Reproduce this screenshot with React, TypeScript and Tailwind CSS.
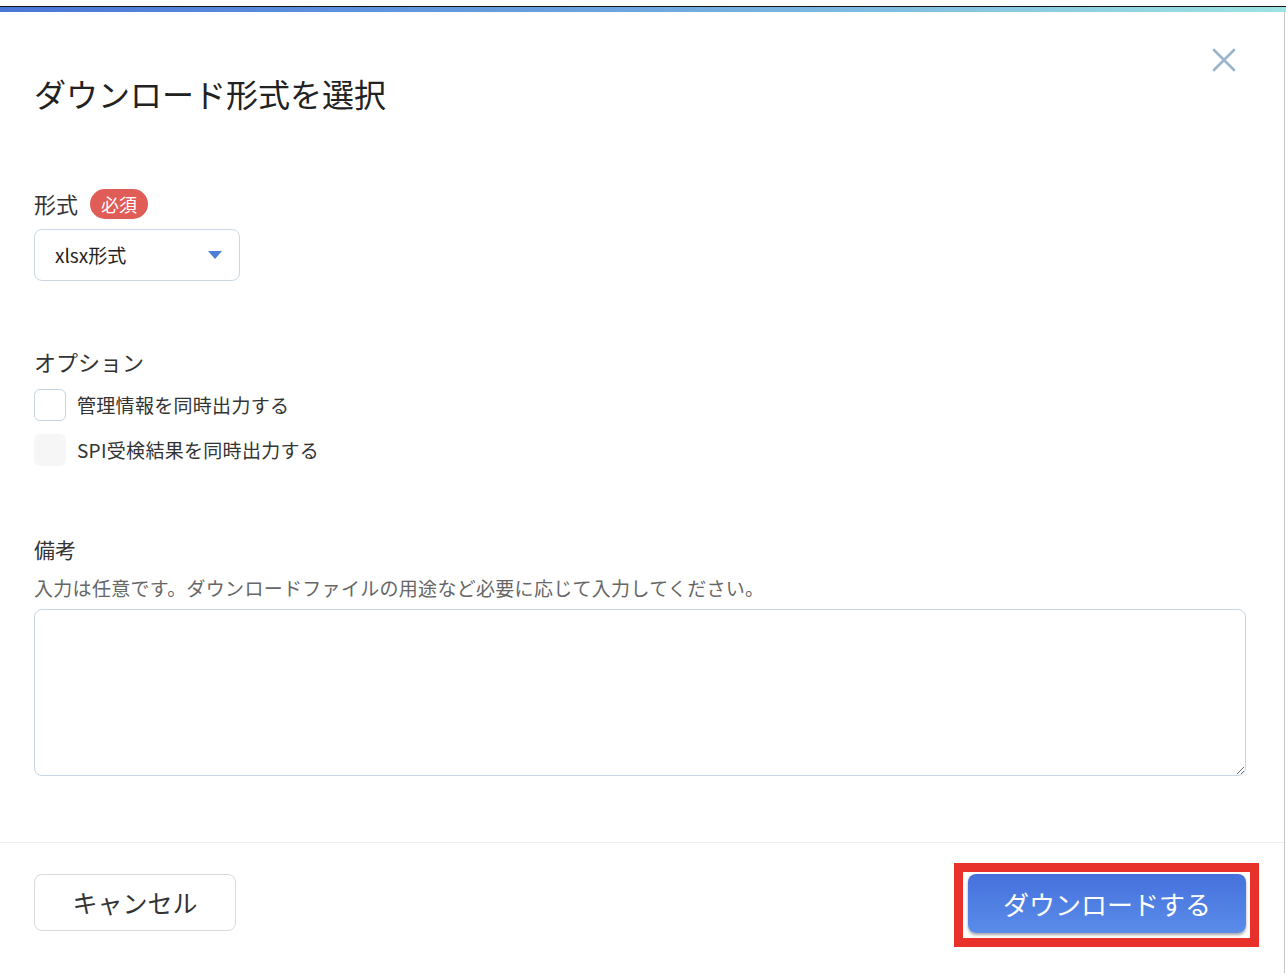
import { useState } from "react";

const font = "font-['Noto_Sans_CJK_JP','Noto_Sans',sans-serif]";

function CloseIcon() {
  return (
    <svg width="24" height="24" viewBox="0 0 24 24" fill="none">
      <path d="M2 2L22 22M22 2L2 22" stroke="#9bb5cc" strokeWidth="2.6" strokeLinecap="round" />
    </svg>
  );
}

export default function App() {
  const [format] = useState("xlsx形式");

  return (
    <div className={`w-[1286px] h-[980px] bg-white text-[#333] ${font}`}>
      <div className="h-[6px]" />
      <div className="h-px bg-[#151515]" />
      <div className="h-[5px] bg-gradient-to-r from-[#4a76d8] via-[#6fa6e0] to-[#9de3e0]" />

      <div className="relative w-[1285px] h-[961px] border-r border-[#c6c6c6] flex flex-col">
        {/* close */}
        <button className="absolute top-[36px] right-[48px] w-6 h-6">
          <CloseIcon />
        </button>

        <div className="pl-[34px] pr-[38px] pt-[61px]">
          <h1 className="text-[32px] leading-[40px] text-[#222]">ダウンロード形式を選択</h1>

          {/* format */}
          <div className="mt-[76px] flex items-center gap-[12px] h-[30px]">
            <span className="text-[22px] leading-[28px] -mt-[3px]">形式</span>
            <span className="h-[30px] px-[11px] rounded-full bg-[#e05c57] text-white text-[18px] leading-[30px]">必須</span>
          </div>
          <div className="mt-[10px] w-[206px] h-[52px] rounded-[8px] border border-[#cbd8e4] flex items-center justify-between pl-[20px] pr-[17px]">
            <span className="text-[19px] text-[#222]">{format}</span>
            <svg width="14" height="8" viewBox="0 0 14 8">
              <path d="M0 0H14L7 8Z" fill="#4a7ed8" />
            </svg>
          </div>

          {/* options */}
          <div className="mt-[66px] text-[22px] leading-[28px]">オプション</div>
          <label className="mt-[14px] flex items-center gap-[11px] h-[32px]">
            <span className="w-[32px] h-[32px] rounded-[6px] border border-[#c6d5e3] bg-white" />
            <span className="text-[19px] tracking-[0.3px] text-[#333]">管理情報を同時出力する</span>
          </label>
          <label className="mt-[13px] flex items-center gap-[11px] h-[32px]">
            <span className="w-[32px] h-[32px] rounded-[6px] bg-[#f6f6f7]" />
            <span className="text-[19px] tracking-[0.3px] text-[#333]">SPI受検結果を同時出力する</span>
          </label>

          {/* note */}
          <div className="mt-[69px] text-[21px] leading-[28px]">備考</div>
          <p className="mt-[12px] text-[19px] leading-[26px] tracking-[0.3px] text-[#666]">
            入力は任意です。ダウンロードファイルの用途など必要に応じて入力してください。
          </p>
          <textarea className="mt-[8px] block w-full h-[167px] rounded-[8px] border border-[#c6d5e3] outline-none p-3 text-[18px] resize-y" />
        </div>

        {/* footer */}
        <div className="mt-[66px] border-t border-[#ececec] pl-[34px] pr-[38px] pt-[31px] flex justify-between items-start">
          <button className="w-[202px] h-[57px] rounded-[8px] border border-[#dadada] bg-white text-[25px] text-[#333]">
            キャンセル
          </button>
          <div className="relative">
            <span className="absolute -left-[14px] -right-[13px] -top-[11px] -bottom-[14px] border-[9px] border-[#e8312a]" />
            <button className="relative w-[278px] h-[59px] rounded-[8px] bg-gradient-to-b from-[#4671dc] to-[#5a8ce9] text-white text-[26px] shadow-[0_2px_3px_rgba(0,0,0,0.35)]">
              ダウンロードする
            </button>
          </div>
        </div>
      </div>
    </div>
  );
}
